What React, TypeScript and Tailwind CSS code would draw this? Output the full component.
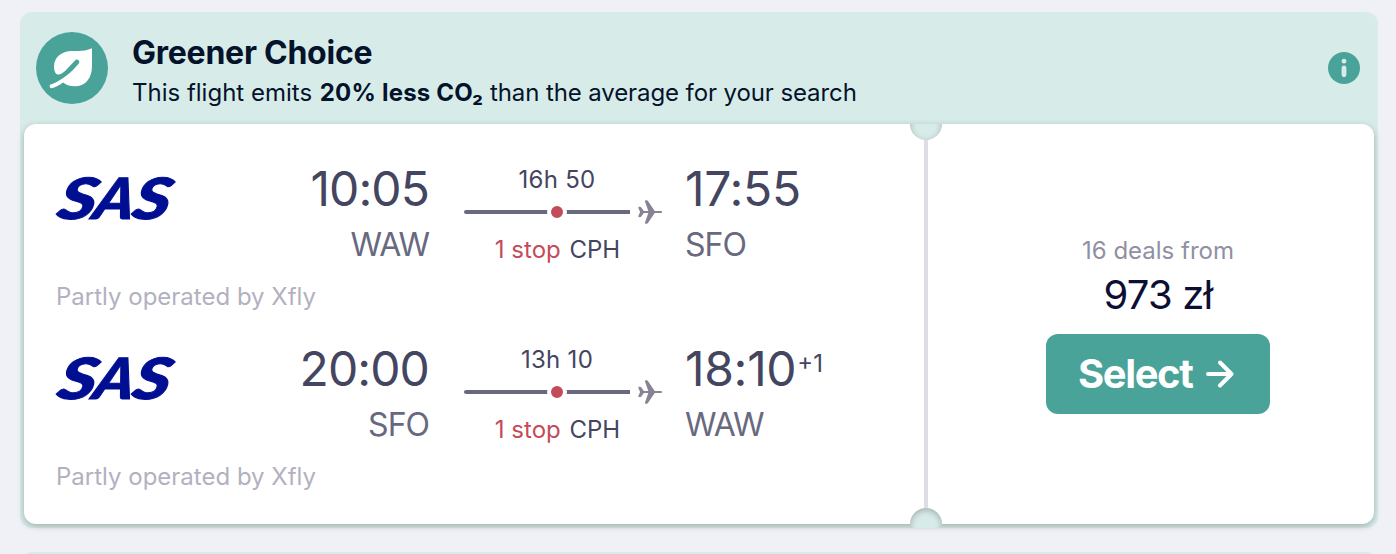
type Leg = {
  depart: string;
  from: string;
  arrive: string;
  to: string;
  duration: string;
  dayOffset?: string;
};

const legs: Leg[] = [
  { depart: '10:05', from: 'WAW', arrive: '17:55', to: 'SFO', duration: '16h 50' },
  { depart: '20:00', from: 'SFO', arrive: '18:10', to: 'WAW', duration: '13h 10', dayOffset: '+1' },
];

function LeafIcon() {
  return (
    <svg viewBox="0 0 72 72" className="h-[72px] w-[72px] shrink-0">
      <circle cx="36" cy="36" r="36" fill="#49a399" />
      <path
        fill="#fff"
        d="M56 16.3C51 18.5 47 19 42 19H36C25 19 18 26 18 34.5C18 40 20 43 23 42.5C28 41.5 31 36.8 39 28.5A2.2 2.2 0 0 1 42.8 31.5C36 39.5 31 44 21.5 49.5C19 51 16.5 52 15 52.3A2 2 0 0 0 15.8 56.2C20 55 24 53 27 50.5C31 53.5 35 54.5 40 54.3C50 53.5 56 46 56 34Z"
      />
    </svg>
  );
}

function InfoIcon() {
  return (
    <svg viewBox="0 0 32 32" className="h-8 w-8">
      <circle cx="16" cy="16" r="16" fill="#49a399" />
      <circle cx="16" cy="9.2" r="2.4" fill="#d7ece9" />
      <rect x="13.6" y="13.6" width="4.8" height="11.6" rx="2.4" fill="#d7ece9" />
    </svg>
  );
}

function PlaneIcon() {
  return (
    <svg viewBox="0 0 24 24" className="h-6 w-6 shrink-0">
      <path
        fill="#898294"
        d="M7 1.5C6.7 .6 7.2 .2 8 .2C9.1 .2 9.8 .7 10.3 1.5L16.7 10.9H23C24.3 10.9 24.3 13.1 23 13.1H16.7L10.3 22.5C9.8 23.3 9.1 23.8 8 23.8C7.2 23.8 6.7 23.4 7 22.5L10.3 13.1H5.8L3.5 16.3C3 16.9 2 17.2 1.2 17.2C.5 17.2 .2 16.7 .4 16.1L2.1 12L.4 7.9C.2 7.3 .5 6.8 1.2 6.8C2 6.8 3 7.1 3.5 7.7L5.8 10.9H10.3Z"
      />
    </svg>
  );
}

function SasLogo() {
  return (
    <svg viewBox="0 0 120 48" className="h-12 w-[120px] shrink-0 overflow-visible" role="img" aria-label="SAS">
      <g
        fill="#000f92"
        stroke="#000f92"
        strokeWidth="1"
        fontFamily="Lato, sans-serif"
        fontWeight="900"
        fontStyle="italic"
        fontSize="57"
        transform="translate(9 0) skewX(-12)"
      >
        <text x="0" y="44.5" textLength="38" lengthAdjust="spacingAndGlyphs">S</text>
        <text x="36" y="44.5" textLength="40" lengthAdjust="spacingAndGlyphs">A</text>
        <text x="75" y="44.5" textLength="37" lengthAdjust="spacingAndGlyphs">S</text>
      </g>
    </svg>
  );
}

function FlightLeg({ leg }: { leg: Leg }) {
  return (
    <div>
      <div className="flex h-28">
        <div className="pt-[14px]">
          <SasLogo />
        </div>
        <div className="w-[254px] pt-px pr-px text-right">
          <div className="text-[48px] leading-[56px] tracking-[-0.9px] text-[#444560]">{leg.depart}</div>
          <div className="text-[32px] leading-[56px] tracking-[-1px] text-[#68697f]">{leg.from}</div>
        </div>
        <div className="ml-[34px] w-[186px] pt-1 text-2xl text-[#444560]">
          <div className="text-center leading-8 tracking-[0.3px]">{leg.duration}</div>
          <div className="relative flex h-8 w-[198px] items-center gap-2">
            <div className="h-1 w-[166px] rounded-l-full bg-[#68697f]" />
            <PlaneIcon />
            <span className="absolute left-[83px] h-5 w-5 rounded-full border-4 border-white bg-[#c44b5a]" />
          </div>
          <div className="mt-1.5 pl-px text-center leading-8">
            <span className="mr-0.5 text-[#c44b5a]">1 stop</span> CPH
          </div>
        </div>
        <div className="ml-[35px] pt-px">
          <div className="flex text-[48px] leading-[56px] tracking-[-0.3px] text-[#444560]">
            {leg.arrive}
            {leg.dayOffset && <span className="ml-px text-2xl leading-[46px] tracking-normal">{leg.dayOffset}</span>}
          </div>
          <div className="text-[32px] leading-[56px] tracking-[-1px] text-[#68697f]">{leg.to}</div>
        </div>
      </div>
      <div className="mt-[9px] h-[31px] text-2xl leading-8 text-[#b2b1c0]">Partly operated by Xfly</div>
    </div>
  );
}

function Divider() {
  return (
    <div className="flex w-8 flex-col items-center">
      <div className="flex h-4 w-8 items-end overflow-hidden">
        <div className="h-8 w-8 shrink-0 rounded-full bg-[#d7ece9] shadow-[inset_0_2px_6px_rgba(37,32,31,0.3)]" />
      </div>
      <div className="w-1 flex-1 bg-[#dcdde5]" />
      <div className="-mb-1 h-5 w-8 overflow-hidden bg-[linear-gradient(to_bottom,transparent_16px,#d7ece9_16px)]">
        <div className="h-8 w-8 rounded-full bg-[#d7ece9] shadow-[inset_0_2px_6px_rgba(37,32,31,0.3)]" />
      </div>
    </div>
  );
}

export default function App() {
  return (
    <div className="h-[554px] overflow-hidden bg-[#eff1f7] pt-3 pr-[18px] pl-5 font-[Inter,sans-serif]">
      <div className="rounded-xl bg-[#d7ece9] p-1 pt-0">
        <div className="flex h-28 items-center pr-[14px] pl-3">
          <LeafIcon />
          <div className="ml-6 flex-1 pt-1.5 text-[#05122b]">
            <h2 className="text-[32px] leading-10 font-bold tracking-[-0.25px]">Greener Choice</h2>
            <p className="mt-1 text-2xl leading-8">
              This flight emits <b className="ml-px tracking-[0.2px]">20% less CO₂</b>
              <span className="tracking-[-0.1px]"> than the average for your search</span>
            </p>
          </div>
          <InfoIcon />
        </div>
        <div className="flex h-[400px] rounded-xl bg-white shadow-[0_2px_6px_rgba(37,32,31,0.3)]">
          <div className="flex w-[886px] flex-col gap-7 pt-9 pl-8">
            {legs.map((leg) => (
              <FlightLeg key={leg.depart} leg={leg} />
            ))}
          </div>
          <Divider />
          <div className="flex flex-1 flex-col items-center justify-center">
            <div className="mt-px text-2xl leading-8 text-[#9090a2]">16 deals from</div>
            <div className="mt-1 text-[40px] leading-[48px] tracking-[-0.8px] text-[#0c0f33]">973 zł</div>
            <button className="mt-[15px] flex h-20 w-56 items-center justify-between rounded-xl bg-[#49a399] pr-9 pl-8 text-[40px] font-bold tracking-[-1.4px] text-white">
              Select
              <svg viewBox="0 0 28 28" className="h-7 w-7" fill="none" stroke="#fff" strokeWidth="4" strokeLinecap="round" strokeLinejoin="round">
                <path d="M2 14H25M14 2.5L25.5 14L14 25.5" />
              </svg>
            </button>
          </div>
        </div>
      </div>
      <div className="mt-6 h-28 rounded-xl bg-[#d7ece9]" />
    </div>
  );
}
